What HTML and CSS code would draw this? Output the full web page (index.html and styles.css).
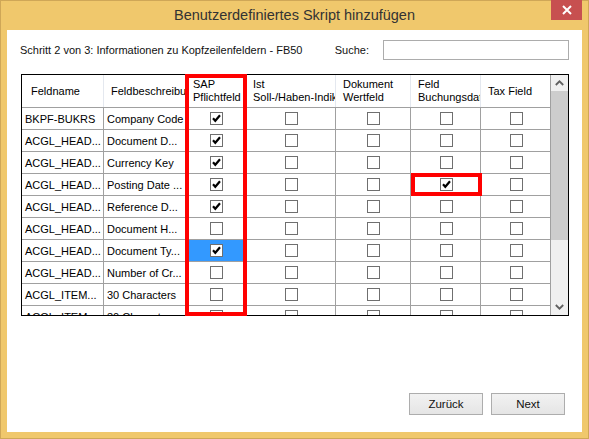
FILE: index.html
```html
<!DOCTYPE html>
<html lang="de">
<head>
<meta charset="utf-8">
<title>Benutzerdefiniertes Skript hinzufügen</title>
<link rel="stylesheet" href="styles.css">
</head>
<body>
<div class="window">
  <div class="titlebar">
    <div class="tb-spacer"></div>
    <div class="title">Benutzerdefiniertes Skript hinzufügen</div>
    <div class="close"><svg width="10" height="10" viewBox="0 0 10 10"><path d="M1 1 L9 9 M9 1 L1 9" stroke="#fff" stroke-width="2"/></svg></div>
  </div>
  <div class="panel">
    <div class="toprow">
      <div class="step">Schritt 2 von 3: Informationen zu Kopfzeilenfeldern - FB50</div>
      <div class="search-label">Suche:</div>
      <div class="search-input"></div>
    </div>
    <div class="grid">
      <div class="grid-body">
        <div class="row head">
          <div class="hc first"><span>Feldname</span></div>
          <div class="hc"><span>Feldbeschreibung</span></div>
          <div class="hc"><span>SAP<br>Pflichtfeld</span></div>
          <div class="hc"><span>Ist<br>Soll-/Haben-Indikator</span></div>
          <div class="hc"><span>Dokument<br>Wertfeld</span></div>
          <div class="hc"><span>Feld<br>Buchungsdatum</span></div>
          <div class="hc"><span>Tax Field</span></div>
        </div>

        <div class="row">
          <div class="c">BKPF-BUKRS</div><div class="c">Company Code</div>
          <div class="c cb"><span class="box"><svg width="11" height="11" viewBox="0 0 11 11"><path d="M2 5.2 L4.3 7.8 L9 2.2" fill="none" stroke="#000" stroke-width="2.2"/></svg></span></div>
          <div class="c cb"><span class="box"></span></div><div class="c cb"><span class="box"></span></div><div class="c cb"><span class="box"></span></div><div class="c cb"><span class="box"></span></div>
        </div>
        <div class="row">
          <div class="c">ACGL_HEAD...</div><div class="c">Document D...</div>
          <div class="c cb"><span class="box"><svg width="11" height="11" viewBox="0 0 11 11"><path d="M2 5.2 L4.3 7.8 L9 2.2" fill="none" stroke="#000" stroke-width="2.2"/></svg></span></div>
          <div class="c cb"><span class="box"></span></div><div class="c cb"><span class="box"></span></div><div class="c cb"><span class="box"></span></div><div class="c cb"><span class="box"></span></div>
        </div>
        <div class="row">
          <div class="c">ACGL_HEAD...</div><div class="c">Currency Key</div>
          <div class="c cb"><span class="box"><svg width="11" height="11" viewBox="0 0 11 11"><path d="M2 5.2 L4.3 7.8 L9 2.2" fill="none" stroke="#000" stroke-width="2.2"/></svg></span></div>
          <div class="c cb"><span class="box"></span></div><div class="c cb"><span class="box"></span></div><div class="c cb"><span class="box"></span></div><div class="c cb"><span class="box"></span></div>
        </div>
        <div class="row">
          <div class="c">ACGL_HEAD...</div><div class="c">Posting Date ...</div>
          <div class="c cb"><span class="box"><svg width="11" height="11" viewBox="0 0 11 11"><path d="M2 5.2 L4.3 7.8 L9 2.2" fill="none" stroke="#000" stroke-width="2.2"/></svg></span></div>
          <div class="c cb"><span class="box"></span></div><div class="c cb"><span class="box"></span></div>
          <div class="c cb"><span class="box"><svg width="11" height="11" viewBox="0 0 11 11"><path d="M2 5.2 L4.3 7.8 L9 2.2" fill="none" stroke="#000" stroke-width="2.2"/></svg></span></div>
          <div class="c cb"><span class="box"></span></div>
        </div>
        <div class="row">
          <div class="c">ACGL_HEAD...</div><div class="c">Reference D...</div>
          <div class="c cb"><span class="box"><svg width="11" height="11" viewBox="0 0 11 11"><path d="M2 5.2 L4.3 7.8 L9 2.2" fill="none" stroke="#000" stroke-width="2.2"/></svg></span></div>
          <div class="c cb"><span class="box"></span></div><div class="c cb"><span class="box"></span></div><div class="c cb"><span class="box"></span></div><div class="c cb"><span class="box"></span></div>
        </div>
        <div class="row">
          <div class="c">ACGL_HEAD...</div><div class="c">Document H...</div>
          <div class="c cb"><span class="box"></span></div>
          <div class="c cb"><span class="box"></span></div><div class="c cb"><span class="box"></span></div><div class="c cb"><span class="box"></span></div><div class="c cb"><span class="box"></span></div>
        </div>
        <div class="row">
          <div class="c">ACGL_HEAD...</div><div class="c">Document Ty...</div>
          <div class="c cb selected"><span class="box"><svg width="11" height="11" viewBox="0 0 11 11"><path d="M2 5.2 L4.3 7.8 L9 2.2" fill="none" stroke="#000" stroke-width="2.2"/></svg></span></div>
          <div class="c cb"><span class="box"></span></div><div class="c cb"><span class="box"></span></div><div class="c cb"><span class="box"></span></div><div class="c cb"><span class="box"></span></div>
        </div>
        <div class="row">
          <div class="c">ACGL_HEAD...</div><div class="c">Number of Cr...</div>
          <div class="c cb"><span class="box"></span></div>
          <div class="c cb"><span class="box"></span></div><div class="c cb"><span class="box"></span></div><div class="c cb"><span class="box"></span></div><div class="c cb"><span class="box"></span></div>
        </div>
        <div class="row">
          <div class="c">ACGL_ITEM...</div><div class="c">30 Characters</div>
          <div class="c cb"><span class="box"></span></div>
          <div class="c cb"><span class="box"></span></div><div class="c cb"><span class="box"></span></div><div class="c cb"><span class="box"></span></div><div class="c cb"><span class="box"></span></div>
        </div>
        <div class="row">
          <div class="c">ACGL_ITEM...</div><div class="c">30 Characters</div>
          <div class="c cb"><span class="box"></span></div>
          <div class="c cb"><span class="box"></span></div><div class="c cb"><span class="box"></span></div><div class="c cb"><span class="box"></span></div><div class="c cb"><span class="box"></span></div>
        </div>
      </div>
      <div class="scrollbar">
        <div class="arrow"><svg width="9" height="6" viewBox="0 0 9 6"><path d="M0.8 5 L4.5 1.3 L8.2 5" fill="none" stroke="#606060" stroke-width="1.8"/></svg></div>
        <div class="thumb"></div>
        <div class="track"></div>
        <div class="arrow"><svg width="9" height="6" viewBox="0 0 9 6"><path d="M0.8 1 L4.5 4.7 L8.2 1" fill="none" stroke="#606060" stroke-width="1.8"/></svg></div>
      </div>
      <div class="mark mark-col"></div>
      <div class="mark mark-cell"></div>
    </div>
    <div class="spacer"></div>
    <div class="buttons">
      <div class="btn">Zurück</div>
      <div class="btn">Next</div>
    </div>
  </div>
</div>
</body>
</html>
```

FILE: styles.css
```css
* { box-sizing: border-box; }
html, body { margin: 0; padding: 0; }
body {
  width: 589px;
  height: 439px;
  font-family: "Liberation Sans", Arial, sans-serif;
  color: #000;
  overflow: hidden;
}
.window {
  width: 589px;
  height: 439px;
  background: #f0c86c;
  border: 1px solid #cfa757;
  display: flex;
  flex-direction: column;
}
.titlebar {
  height: 29px;
  display: grid;
  grid-template-columns: 31px 1fr 31px;
  padding: 0 6px;
  align-items: start;
}
.title {
  text-align: center;
  font-size: 14.5px;
  line-height: 29px;
  color: #333;
}
.close {
  margin-top: -1px;
  height: 20px;
  background: #c75050;
  display: flex;
  align-items: center;
  justify-content: center;
}
.panel {
  flex: 1;
  margin: 0 6px 6px 6px;
  background: #fff;
  display: flex;
  flex-direction: column;
  padding: 10px 17px 17px 13px;
}
.toprow {
  display: flex;
  align-items: center;
  height: 20px;
  font-size: 11px;
}
.step { flex: 1; color: #111; }
.search-label { margin-right: 14px; color: #111; }
.search-input {
  width: 186px;
  height: 20px;
  border: 1px solid #acacac;
  margin-right: -4px;
}
.grid {
  position: relative;
  margin-top: 14px;
  margin-left: 1px;
  width: 548px;
  height: 242px;
  border: 1px solid #000;
  display: flex;
  font-size: 11px;
}
.grid-body {
  width: 529px;
  height: 240px;
  overflow: hidden;
}
.row {
  display: grid;
  grid-template-columns: 82px 82px 60px 90px 75px 70px 70px;
  height: 22px;
  border-bottom: 1px solid #a0a0a0;
}
.row.head { height: 33px; }
.hc {
  border-right: 1px solid #e4e8ef;
  padding-left: 7px;
  display: flex;
  align-items: center;
  white-space: nowrap;
  overflow: hidden;
  line-height: 13px;
}
.hc.first { padding-left: 9px; }
.hc:last-child { border-right: 1px solid #a0a0a0; }
.c {
  border-right: 1px solid #a0a0a0;
  padding-left: 3px;
  display: flex;
  align-items: center;
  white-space: nowrap;
  overflow: hidden;
}
.c.cb { justify-content: center; padding-left: 1px; }
.c.selected { background: #3399ff; }
.box {
  width: 13px;
  height: 13px;
  border: 1px solid #6f6f6f;
  background: #fff;
  display: flex;
  align-items: center;
  justify-content: center;
}
.box svg { display: block; }
.scrollbar {
  width: 17px;
  height: 240px;
  background: #f0f0f0;
  display: flex;
  flex-direction: column;
}
.arrow {
  height: 16px;
  display: flex;
  align-items: center;
  justify-content: center;
}
.thumb {
  height: 149px;
  background: #cdcdcd;
}
.track { flex: 1; }
.mark {
  position: absolute;
  border: 4px solid #ff0000;
}
.mark-col {
  left: 163px;
  top: -1px;
  width: 62px;
  height: 242px;
}
.mark-cell {
  left: 389px;
  top: 98px;
  width: 71px;
  height: 23px;
}
.spacer { flex: 1; }
.buttons {
  display: flex;
  justify-content: flex-end;
  gap: 8px;
}
.btn {
  width: 74px;
  height: 22px;
  border: 1px solid #adadad;
  background: linear-gradient(#f2f2f2, #e5e5e5);
  font-size: 11.5px;
  display: flex;
  align-items: center;
  justify-content: center;
  color: #111;
}
```
